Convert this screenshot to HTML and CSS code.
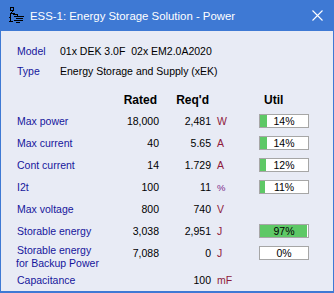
FILE: index.html
```html
<!DOCTYPE html>
<html>
<head>
<meta charset="utf-8">
<link rel="stylesheet" href="styles.css">
</head>
<body>
<div class="window">
  <div class="titlebar">
    <svg class="app-icon" width="17" height="18" viewBox="0 0 17 18" shape-rendering="crispEdges">
      <g fill="none" stroke="#000" stroke-width="1">
        <path d="M3.5 1.5h3v3h-3z"/>
        <path d="M6.5 4.5l-3 3v4"/>
        <path d="M3.5 7.5h4"/>
        <path d="M3.5 9.5v6.5"/>
        <path d="M1.5 15.5h4"/>
        <path d="M1.5 11.5h2"/>
        <path d="M5.5 8.5h5v2"/>
        <path d="M6.5 10.5h10"/>
        <path d="M8.5 12.5h7"/>
        <path d="M6.5 14.5h9"/>
        <path d="M8.5 16.5h4"/>
      </g>
    </svg>
    <span class="title">ESS-1: Energy Storage Solution - Power</span>
    <svg class="close" width="11" height="11" viewBox="0 0 11 11">
      <path d="M0.5 0.5L10.5 10.5M10.5 0.5L0.5 10.5" stroke="#fff" stroke-width="1.1" fill="none"/>
    </svg>
  </div>
  <div class="content">
    <div class="info">
      <span class="lbl">Model</span><span class="val">01x DEK 3.0F&nbsp; 02x EM2.0A2020</span>
      <span class="lbl">Type</span><span class="val">Energy Storage and Supply (xEK)</span>
    </div>
    <div class="table">
      <span class="hd"></span>
      <span class="hd hd-rated">Rated</span>
      <span class="hd hd-req">Req'd</span>
      <span class="hd"></span>
      <span class="hd hd-util">Util</span>

      <span class="lbl">Max power</span><span class="num">18,000</span><span class="num">2,481</span><span class="unit">W</span>
      <div class="bar"><div class="fill" style="width:14%"></div><span class="pct">14%</span></div>

      <span class="lbl">Max current</span><span class="num">40</span><span class="num">5.65</span><span class="unit">A</span>
      <div class="bar"><div class="fill" style="width:14%"></div><span class="pct">14%</span></div>

      <span class="lbl">Cont current</span><span class="num">14</span><span class="num">1.729</span><span class="unit">A</span>
      <div class="bar"><div class="fill" style="width:12%"></div><span class="pct">12%</span></div>

      <span class="lbl">I2t</span><span class="num">100</span><span class="num">11</span><span class="unit unit-pct">%</span>
      <div class="bar"><div class="fill" style="width:11%"></div><span class="pct">11%</span></div>

      <span class="lbl">Max voltage</span><span class="num">800</span><span class="num">740</span><span class="unit">V</span>
      <span></span>

      <span class="lbl">Storable energy</span><span class="num">3,038</span><span class="num">2,951</span><span class="unit">J</span>
      <div class="bar"><div class="fill" style="width:97%"></div><span class="pct">97%</span></div>

      <span class="lbl lbl2 top">Storable energy<br><span class="indent">for Backup Power</span></span><span class="num top">7,088</span><span class="num top">0</span><span class="unit top">J</span>
      <div class="bar top-bar"><div class="fill" style="width:0%"></div><span class="pct">0%</span></div>

      <span class="lbl">Capacitance</span><span></span><span class="num">100</span><span class="unit">mF</span>
      <span></span>
    </div>
  </div>
</div>
</body>
</html>
```
FILE: styles.css
```css
html, body {
  margin: 0;
  padding: 0;
}
body {
  width: 334px;
  height: 293px;
  overflow: hidden;
  font-family: "Liberation Sans", Arial, sans-serif;
}
.window {
  width: 334px;
  height: 293px;
  box-sizing: border-box;
  border: 1px solid #3e79d4;
  border-top: 0;
  border-bottom-width: 2px;
  background: #e8ebf5;
  display: flex;
  flex-direction: column;
}
.titlebar {
  height: 31px;
  margin: 0 -1px;
  background: #3e79d4;
  display: flex;
  align-items: center;
  color: #fff;
  flex-shrink: 0;
}
.app-icon {
  margin-left: 7px;
  margin-top: -2px;
}
.title {
  margin-left: 6px;
  font-size: 11.4px;
  letter-spacing: 0;
  flex: 1;
  padding-top: 1px;
}
.close {
  margin-right: 11px;
  margin-top: 0;
}
.content {
  padding: 10px 0 0 16px;
  font-size: 10.5px;
  color: #000;
}
.info {
  display: grid;
  grid-template-columns: 43px auto;
  grid-auto-rows: 20px;
  align-items: center;
}
.lbl {
  color: #16169c;
}
.table {
  margin-top: 9px;
  display: grid;
  grid-template-columns: 93px 49px 52px 48px 50px;
  grid-template-rows: 20px repeat(6, 22px) 28px 20px;
  align-items: center;
}
.hd {
  font-weight: bold;
  font-size: 12px;
}
.hd-rated {
  text-align: right;
  padding-right: 2px;
}
.hd-req {
  text-align: right;
  padding-right: 2px;
}
.hd-util {
  padding-left: 5px;
}
.num {
  text-align: right;
}
.unit {
  padding-left: 6px;
  color: #8e1a3c;
}
.unit-pct {
  color: #7a2a8a;
  font-size: 9.5px;
}
.top {
  align-self: start;
  line-height: 22px;
}
.lbl2 {
  line-height: 13px;
  padding-top: 2px;
}
.indent {
  margin-left: -1px;
}
.bar {
  width: 50px;
  height: 14px;
  box-sizing: border-box;
  border: 1px solid #a6a6a6;
  background: #fff;
  display: grid;
  align-items: center;
}
.top-bar {
  align-self: start;
  margin-top: 4px;
}
.fill {
  grid-area: 1 / 1;
  height: 12px;
  background: #5ec866;
  justify-self: start;
}
.pct {
  grid-area: 1 / 1;
  text-align: center;
  line-height: 12px;
  font-size: 10.5px;
  color: #000;
}
```
